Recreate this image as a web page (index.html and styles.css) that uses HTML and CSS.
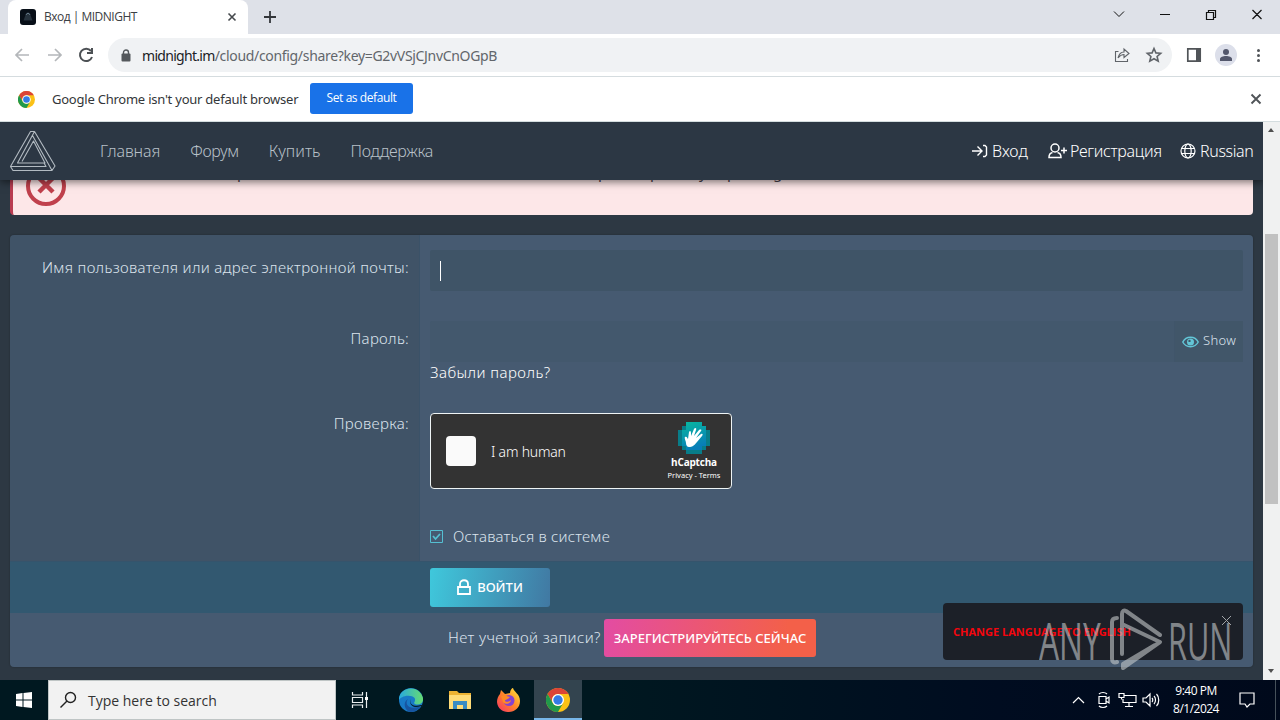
FILE: index.html
```html
<!DOCTYPE html>
<html lang="ru">
<head>
<meta charset="utf-8">
<title>Вход | MIDNIGHT</title>
<link rel="stylesheet" href="styles.css">
</head>
<body>
<div class="tabs">
  <div class="tab">
    <svg class="favicon" width="16" height="16" viewBox="0 0 16 16"><rect width="16" height="16" rx="3" fill="#080f18"/><path d="M3.500 11.500L5.500 6l1.500-2.500h2L10.500 6l2 5.500z" fill="#26323d"/><path d="M6 6l1-1.500h2L10 6" fill="none" stroke="#657988"/></svg>
    <span class="tab-title">Вход | MIDNIGHT</span>
    <svg class="tab-close" width="10" height="10" viewBox="0 0 10 10"><path d="M1.500 1.500l7 7m0-7l-7 7" stroke="#45494d" stroke-width="1.600"/></svg>
  </div>
  <svg class="plus" width="14" height="14" viewBox="0 0 14 14"><path d="M7 1v12M1 7h12" stroke="#34373b" stroke-width="1.800"/></svg>
  <svg class="winbtns" width="160" height="20" viewBox="0 0 160 20" fill="none" stroke="#111" stroke-width="1.200"><path d="M4 7.500l5 5 5-5" stroke-width="1"/><path d="M50 10.500h10M96.500 8.500h7v7h-7zM98.500 8.500v-2h7v7h-2M142.500 6l9 9m0-9l-9 9"/></svg>
</div>
<div class="toolbar">
  <svg width="90" height="20" viewBox="0 0 90 20" fill="none" stroke="#b4b7ba" stroke-width="1.700"><path d="M21 10H8m6-6l-6 6 6 6M40 10h13m-6-6l6 6-6 6"/><path d="M83 6A6.200 6.200 0 1 0 84 12M84 3v5h-5" stroke="#4c5054" stroke-width="2"/></svg>
  <div class="omnibox">
    <svg width="10" height="13" viewBox="0 0 10 13"><rect x=".5" y="4.500" width="9" height="8" rx="1" fill="#54585c"/><path d="M2.500 5V3.500a2.500 2.500 0 0 1 5 0V5" fill="none" stroke="#54585c" stroke-width="1.400"/></svg>
    <span class="url"><b>midnight.im</b><span class="path">/cloud/config/share?key=G2vVSjCJnvCnOGpB</span></span>
    <svg class="omni-icons" width="52" height="20" viewBox="0 0 52 20" fill="none" stroke="#606469" stroke-width="1.300"><path d="M6.500 6.500h-3v10h12V14M6 13c1-4 3-6 6-6V4l5 4.500-5 4v-3c-3 0-4 1-6 3.500z" stroke-width="1.100"/><path d="M42 3.500l1.900 4.400 4.800.4-3.600 3.200 1.100 4.700-4.200-2.500-4.200 2.500 1.100-4.700-3.600-3.200 4.800-.4z" stroke-width="1.600"/></svg>
  </div>
  <svg class="right-icons" width="90" height="24" viewBox="0 0 90 24"><path d="M5.800 5.800h12.400v12.400H5.800z" fill="none" stroke="#505458" stroke-width="1.700"/><path d="M14 5h5v14h-5z" fill="#505458"/><circle cx="44" cy="12" r="11" fill="#dcdfea"/><circle cx="44" cy="9" r="3" fill="#53576c"/><path d="M38 18v-2c0-4 12-4 12 0v2z" fill="#53576c"/><g fill="#505458"><circle cx="76.500" cy="7.500" r="1.500"/><circle cx="76.500" cy="12.500" r="1.500"/><circle cx="76.500" cy="17.500" r="1.500"/></g></svg>
</div>
<div class="infobar">
  <svg class="chrome" width="17" height="17" viewBox="0 0 24 24"><circle cx="12" cy="12" r="12" fill="#fbc116"/><path d="M1.600 6A12 12 0 0 1 22.400 6H12a6 6 0 0 0-5.200 9z" fill="#dc4437"/><path d="M1.600 6A12 12 0 0 0 12 24l5.200-9a6 6 0 0 1-10.400 0z" fill="#21994b"/><circle cx="12" cy="12" r="6" fill="#fff"/><circle cx="12" cy="12" r="4.700" fill="#347be5"/></svg>
  <span class="info-text">Google Chrome isn't your default browser</span>
  <span class="set-default"><span>Set as default</span></span>
  <svg class="info-close" width="12" height="12" viewBox="0 0 12 12"><path d="M1.500 1.500l9 9m0-9l-9 9" stroke="#505458" stroke-width="1.900"/></svg>
</div>
<div class="viewport">
  <main class="page">
    <header class="header">
      <svg class="logo" width="46" height="42" viewBox="0 0 46 42" fill="none" stroke="#b3bbc2" stroke-width="1.100" stroke-linejoin="round"><path d="M20.500 1.500h4L45 36l-3 4.500H3L.5 36.500zM24.500 1.500L7.500 33H35L23.500 11 12 31.500M.5 36.500H36L34 33M42 40.500L22.500 5.500"/></svg>
      <nav class="nav"><span class="n1">Главная</span><span class="n2">Форум</span><span class="n3">Купить</span><span class="n4">Поддержка</span></nav>
      <div class="account">
        <svg class="i-login" width="16" height="14" viewBox="0 0 16 14" fill="none" stroke="#fff" stroke-width="1.400"><path d="M0 7h10M5.500 2.500L10 7l-4.500 4.500M11 1.500h2l1.500 1.500v8L13 12.500h-2"/></svg><span class="a1">Вход</span>
        <svg class="i-user" width="20" height="16" viewBox="0 0 20 16" fill="none" stroke="#fff" stroke-width="1.500"><circle cx="7" cy="5" r="4"/><path d="M4.500 9.500C2 10 1 11.500 1 14.500h12c0-3-1-4.500-3.500-5M13 7.500h6m-3-3v6"/></svg><span class="a2">Регистрация</span>
        <svg class="i-globe" width="16" height="16" viewBox="0 0 16 16" fill="none" stroke="#fff" stroke-width="1.200"><circle cx="8" cy="8" r="7"/><ellipse cx="8" cy="8" rx="3.200" ry="7"/><path d="M1.500 5.500h13m-13 5h13"/></svg><span class="a3">Russian</span>
      </div>
    </header>
    <section class="error">
      <svg class="err-icon" width="42" height="42" viewBox="0 0 42 42" fill="none" stroke="#c0404c"><circle cx="21" cy="21" r="18" stroke-width="4"/><path d="M14 13l14 14m0-14l-14 14" stroke-width="4.500"/></svg>
      <p class="err-text"><span>для</span><span>работы</span><span>данной</span><span>раз</span><span>раз</span><span>ус</span><span>ролик</span><span>g</span></p>
    </section>
    <form class="form">
      <div class="fields">
        <div class="label l-user"><span>Имя пользователя или адрес электронной почты:</span></div>
        <div class="field f-user"><div class="input active"><i class="caret"></i></div></div>
        <div class="label l-pass"><span>Пароль:</span></div>
        <div class="field f-pass"><div class="input pass"><div class="show"><svg width="17" height="12" viewBox="0 0 17 12"><path d="M.8 6C4-.3 13-.3 16.200 6 13 12.300 4 12.300.8 6z" fill="none" stroke="#63c6d7" stroke-width="1.500"/><circle cx="8.500" cy="6" r="3.500" fill="#63c6d7"/><circle cx="7.500" cy="4.900" r="1.200" fill="#3d5968"/></svg><span>Show</span></div></div><span class="forgot">Забыли пароль?</span></div>
        <div class="label l-check"><span>Проверка:</span></div>
        <div class="field f-check">
          <div class="captcha"><i class="box"></i><span class="human">I am human</span>
            <div class="brand"><svg width="32" height="32" viewBox="0 0 32 32"><defs><linearGradient id="hc" x1="0" y1="0" x2=".3" y2="1"><stop stop-color="#08b89f"/><stop offset="1" stop-color="#087eb8"/></linearGradient></defs><path d="M8 0h16v4h4v4h4v16h-4v4h-4v4H8v-4H4v-4H0V8h4V4h4z" fill="#087d89"/><path d="M8 0h16v4h4v20h-4v4H8v-4H4V8h4z" fill="url(#hc)"/><path d="M8 21c0-2-2-5-1-6 2-1 2 1 3 2l1-7c1-2 2-1 2 1v3l3-7c1-2 3-1 2 1l-2 6 5-6c2-1 3 0 2 1l-5 7 5-4c2-1 2 1 1 2l-5 6c-3 4-5 5-8 5-2 0-3-2-3-4z" fill="#fff"/></svg><b>hCaptcha</b><small>Privacy - Terms</small></div>
          </div>
          <div class="remember"><svg width="13" height="13" viewBox="0 0 13 13" fill="none" stroke="#55bfd2"><path d="M.5.500h12v12H.5z"/><path d="M3 6l2.500 3L10 4" stroke-width="1.800"/></svg><span>Оставаться в системе</span></div>
        </div>
      </div>
      <div class="submit"><div class="login"><svg width="14" height="17" viewBox="0 0 14 17" fill="none" stroke="#fff" stroke-width="1.800"><path d="M1 8h12v7H1zM3 8V5c0-5 8-5 8 0v3"/></svg><span>ВОЙТИ</span></div></div>
      <div class="signup"><span class="q">Нет учетной записи?</span><div class="reg"><span>ЗАРЕГИСТРИРУЙТЕСЬ СЕЙЧАС</span></div></div>
    </form>
    <aside class="toast"><span>CHANGE LANGUAGE TO ENGLISH</span><svg width="11" height="11" viewBox="0 0 11 11"><path d="M1 1l9 9m0-9l-9 9" stroke="#a0a4a8"/></svg></aside>
    <div class="watermark"><span class="any">ANY</span><svg width="58" height="64" viewBox="0 0 58 64" fill="none" stroke="#c4c8ca" stroke-width="4" stroke-linecap="round" stroke-linejoin="round"><path d="M9 10c-3 0-5 1-5 4v37c0 3 2 4 5 3M14 46V6c0-3 2-4 4-3l34 24M14 16l38 18-37 26v-4l32-19M14 46v-5"/></svg><span class="run">RUN</span></div>
  </main>
  <div class="scroll"><i class="up"></i><i class="thumb"></i><i class="down"></i></div>
</div>
<footer class="taskbar">
  <div class="start"><svg width="16" height="16" viewBox="0 0 16 16" fill="#fff"><path d="M0 2l6.500-1v6.500H0zM7.500.900L16 0v7.500H7.500zM0 8.500h6.500V15L0 14zM7.500 8.500H16V16l-8.500-1z"/></svg></div>
  <div class="search"><svg width="18" height="18" viewBox="0 0 18 18" fill="none" stroke="#222" stroke-width="1.400"><circle cx="10.500" cy="6.500" r="5"/><path d="M7 10l-6.500 6.500"/></svg><span>Type here to search</span></div>
  <div class="app"><svg width="18" height="18" viewBox="0 0 18 18" fill="none" stroke="#e9eef0" stroke-width="1.200"><path d="M1.500 1v3h10V1M1.500 6.500h10v5h-10zM1.500 17v-3h10v3M15.500 1v16"/><path d="M14 6h3v3h-3z" fill="#fff" stroke="none"/></svg></div>
  <div class="app"><svg width="24" height="24" viewBox="0 0 24 24"><defs><linearGradient id="eg" x1="0" x2="1"><stop stop-color="#27a9df"/><stop offset="1" stop-color="#66db72"/></linearGradient></defs><circle cx="12" cy="12" r="12" fill="#187ac7"/><path d="M0 12C-1-1 20-5 24 10c1 7-7 8-9 5 3-5-1-7-4-7C6 7 1 10 0 12z" fill="url(#eg)"/><path d="M9 11c-4 5 1 12 13 7-3 5-8 6-11 6-5-1-8-10-2-13z" fill="#1755a1"/><path d="M12 11c-2 5 2 8 10 6l3 0v2l-3-1c-7 3-13-1-10-7z" fill="#061e2b"/></svg></div>
  <div class="app"><svg width="22" height="20" viewBox="0 0 22 20"><path d="M0 1h8l2 2h12v16H0z" fill="#edb333"/><path d="M0 5h22v14H0z" fill="#ffdc78"/><path d="M4 19v-8h14v8h-4v-4H8v4z" fill="#3a8cc3"/></svg></div>
  <div class="app"><svg width="24" height="24" viewBox="0 0 24 24"><defs><linearGradient id="ff" x1="1" y1="0" x2="0" y2="1"><stop stop-color="#ffed3e"/><stop offset=".5" stop-color="#ff8429"/><stop offset="1" stop-color="#f62e69"/></linearGradient></defs><path d="M3 6l1-4 4 4 5-1c0-3 2-5 3-5 1 4 7 6 7 13 0 14-22 15-23 1C0 11 1 8 3 6z" fill="url(#ff)"/><circle cx="12" cy="12.500" r="5.500" fill="#8442d2"/><path d="M4 8c4-2 5 0 9 1-2 3-5 2-5 4 2 2 5 0 6-1 0 4-6 5-8 2z" fill="#ff8b24"/></svg></div>
  <div class="app current"><svg width="24" height="24" viewBox="0 0 24 24"><circle cx="12" cy="12" r="12" fill="#fbc116"/><path d="M1.600 6A12 12 0 0 1 22.400 6H12a6 6 0 0 0-5.200 9z" fill="#dc4437"/><path d="M1.600 6A12 12 0 0 0 12 24l5.200-9a6 6 0 0 1-10.400 0z" fill="#21994b"/><circle cx="12" cy="12" r="6" fill="#fff"/><circle cx="12" cy="12" r="4.700" fill="#347be5"/></svg></div>
  <svg class="tray" width="90" height="18" viewBox="0 0 90 18" fill="none" stroke="#fff" stroke-width="1.200"><path d="M1 12l5.500-5.500L12 12M27 5.500h7v7h-7zM34 8l3-2v6l-3-2M27 3c2-2 6-2 8 0M27 15c2 2 6 2 8 0M52 4.500h12v7H51V8M57 11.500v4m-4 0h8M47 2.500h5v4h-5zM49.500 6.500v2M71 7h3l4-4v12l-4-4h-3zM80 7c1 1 1 3 0 4M82 5c2 2 2 6 0 8M84.500 3c3 3 3 9 0 12"/></svg>
  <div class="clock"><span class="time">9:40 PM</span><span class="date">8/1/2024</span></div>
  <svg class="notice" width="16" height="16" viewBox="0 0 16 16" fill="none" stroke="#fff" stroke-width="1.200"><path d="M1 1h14v11h-4l-3 3-2-3H1z"/></svg>
  <i class="edge"></i>
</footer>
</body>
</html>
```

FILE: styles.css
```css
* { box-sizing: border-box; }
body { margin: 0; width: 1280px; height: 720px; overflow: hidden; display: flex; flex-direction: column; font-family: "Noto Sans", "Open Sans", sans-serif; background: #fff; }
svg { display: block; flex-shrink: 0; }
span { white-space: nowrap; }
.tabs { height: 34px; flex-shrink: 0; background: #dee1e8; display: flex; align-items: center; padding-left: 8px; }
.tab { height: 34px; width: 240px; background: #fff; border-radius: 8px 8px 0 0; display: flex; align-items: center; padding: 0 11px 0 12px; }
.tab-title { font: 12px "Open Sans", sans-serif; letter-spacing: -.5px; color: #3c4043; margin: 0 0 1px 8px; }
.tab-close { margin-left: auto; }
.plus { margin-left: 15px; }
.winbtns { margin-left: auto; margin-bottom: 6px; margin-right: 10px; }
.toolbar { height: 43px; flex-shrink: 0; background: #fff; border-bottom: 1px solid #d5dcdf; display: flex; align-items: center; padding-left: 7px; }
.toolbar > svg:first-child { margin-left: 1px; }
.omnibox { width: 1064px; height: 34px; border-radius: 17px; background: #f0f2f4; margin-left: 10px; display: flex; align-items: center; padding-left: 13px; }
.url { margin-left: 11px; font-size: 14px; color: #62666b; }
.url b { font-weight: 400; color: #202124; letter-spacing: -.7px; }
.path { letter-spacing: -.32px; }
.omni-icons { margin-left: auto; margin-right: 8px; }
.right-icons { margin-left: 10px; }
.infobar { height: 45px; flex-shrink: 0; border-bottom: 1px solid #d4dddf; display: flex; align-items: center; padding: 0 18px 0 18px; }
.info-text { margin-left: 17px; width: 246px; font-size: 13px; letter-spacing: -.23px; color: #333639; }
.set-default { width: 103px; height: 31px; margin: 0 0 2px 12px; background: #1972e8; color: #fff; border-radius: 3px; font: 12px "Open Sans", sans-serif; letter-spacing: -.42px; display: grid; place-items: center; }
.set-default span { margin-bottom: 1px; }
.info-close { margin-left: auto; }
.viewport { height: 558px; flex-shrink: 0; display: flex; position: relative; }
.page { width: 1263px; height: 558px; background: #2d3843; overflow: hidden; position: relative; }
.header { height: 58px; background: #2c3744; box-shadow: 0 2px 8px #0008; position: relative; z-index: 2; display: flex; align-items: center; padding: 0 10px; color: #b8c0c8; font-size: 16px; font-weight: 300; }
.nav { display: flex; gap: 30px; margin: 0 0 1px 44px; letter-spacing: -.1px; }
.n2 { letter-spacing: -.3px; }
.n3 { letter-spacing: .05px; }
.n4 { letter-spacing: -.3px; }
.account { margin-left: auto; display: flex; align-items: center; color: #fff; }
.account span { margin: 0 0 1px 4px; }
.account .a1 { width: 36px; letter-spacing: 0; }
.account .a2 { margin-left: 2px; width: 91px; letter-spacing: -.32px; }
.account .a3 { width: 53px; letter-spacing: -.35px; }
.i-user { margin-left: 20px; }
.i-globe { margin-left: 19px; }
.error { height: 50px; margin: -15px 10px 0; background: #fde7e8; border-left: 3px solid #b93c51; border-radius: 4px; display: flex; position: relative; }
.err-icon { margin: 0 0 0 12px; }
.err-text { position: absolute; margin: 0; left: 84px; top: -4px; font-size: 15px; line-height: 22px; color: #49404a; display: grid; grid-template-columns: 140px 245px 116px 52px 49px 28px 46px 20px; }
.form { margin: 20px 10px 0; height: 432px; border-radius: 4px; overflow: hidden; box-shadow: 0 0 2px #0005; color: #dce4ed; font-size: 15px; font-weight: 300; letter-spacing: .33px; }
.fields { height: 326px; display: grid; grid-template: 71px 92px 163px / 410px 1fr; }
.label { background: #405367; border-right: 1px solid #3b5268; text-align: right; padding: 21px 10px 0 0; line-height: 22px; }
.field { background: #465a71; padding: 15px 10px 0; }
.input { height: 41px; border-radius: 2px; background: #3f5467; }
.active { padding: 11px 10px; }
.caret { display: block; width: 1px; height: 20px; background: #fff; }
.pass { background: #43586d; display: flex; justify-content: flex-end; }
.show { width: 69px; border-left: 1px solid #40556a; background: #415669; display: flex; align-items: center; gap: 4px; padding: 0 7px; font-size: 13px; letter-spacing: .3px; }
.show span { margin-bottom: 3px; }
.l-check { padding-top: 14px; }
.forgot { display: block; margin-top: -1px; line-height: 22px; color: #fff; letter-spacing: .45px; }
.captcha { width: 302px; height: 76px; background: #333; border: 1px solid #eef4f5; border-radius: 4px; display: flex; align-items: center; padding-left: 15px; color: #fff; letter-spacing: 0; }
.box { width: 30px; height: 30px; border-radius: 4px; background: #fafafa; }
.human { font-size: 14px; margin-left: 15px; letter-spacing: -.2px; }
.brand { width: 74px; margin-left: auto; display: flex; flex-direction: column; align-items: center; }
.brand b { font: bold 10px/17px "Open Sans", sans-serif; letter-spacing: -.2px; }
.brand small { font-size: 7.500px; font-weight: 400; line-height: 9px; white-space: nowrap; }
.remember { margin-top: 36px; display: flex; gap: 10px; align-items: center; line-height: 22px; letter-spacing: .2px; }
.remember svg { margin-top: 1px; }
.submit { height: 52px; background: #325870; border-top: 1px solid #35546c; padding: 6px 0 0 420px; letter-spacing: 0; }
.login { width: 120px; height: 39px; border-radius: 3px; background: linear-gradient(100deg, #3fc8dc, #4178a2); color: #fff; font-size: 13px; font-weight: 500; display: flex; align-items: center; justify-content: center; gap: 6px; }
.login span { margin-bottom: 1px; }
.signup { height: 54px; background: #465a71; display: flex; align-items: flex-start; padding: 6px 0 0 438px; }
.q { width: 156px; line-height: 37px; letter-spacing: .38px; }
.reg { width: 212px; height: 38px; background: linear-gradient(100deg, #e34ca3, #f36049 85%); border-radius: 3px; display: grid; place-items: center; color: #fff; font-size: 13px; font-weight: 500; letter-spacing: 0; }
.toast { position: absolute; left: 943px; top: 481px; width: 300px; height: 57px; border-radius: 4px; background: #1c2028; color: #f4060e; font: bold 11px "Open Sans", sans-serif; display: flex; align-items: center; padding-left: 10px; }
.toast svg { position: absolute; right: 11px; top: 12px; }
.watermark { position: absolute; left: 1039px; top: 485px; width: 200px; height: 66px; opacity: .6; color: #c4c8ca; display: flex; align-items: center; }
.watermark span { font: 500 52px/60px "Open Sans", sans-serif; width: 65px; height: 60px; transform: scaleX(.61); transform-origin: left; }
.watermark svg { margin-left: 4px; }
.watermark .run { margin-left: 2px; transform: scaleX(.59); }
.scroll { width: 17px; background: #f0f1f1; position: relative; }
.up, .down, .thumb { position: absolute; }
.up { top: 6px; left: 5px; border: 3.5px solid transparent; border-bottom: 4px solid #505050; border-top: 0; }
.thumb { width: 13px; height: 270px; left: 2px; top: 112px; background: #c1c1c1; }
.down { bottom: 7px; left: 5px; border: 3.5px solid transparent; border-top: 4px solid #505050; border-bottom: 0; }
.taskbar { height: 40px; background: linear-gradient(90deg, #001820 0, #001820 48%, #000c20 78%, #00091b); display: flex; align-items: center; color: #fff; }
.start { width: 48px; display: grid; place-items: center; }
.search { width: 288px; height: 40px; background: #f2f2f2; border: 1px solid #bfc5c5; color: #333; display: flex; align-items: center; gap: 10px; padding-left: 11px; font: 14px "Open Sans", sans-serif; }
.app { width: 48px; height: 40px; display: grid; place-items: center; }
.app:nth-child(4) { margin-left: 3px; }
.app:nth-child(n+5) { margin-left: 1px; }
.current { background: #33444f; border-bottom: 2px solid #78b7e9; padding-top: 2px; }
.tray { margin: 0 0 0 auto; }
.clock { width: 60px; display: flex; flex-direction: column; align-items: center; font: 12px/18px "Open Sans", sans-serif; letter-spacing: -.5px; margin-left: 4px; }
.notice { margin-left: 13px; }
.edge { width: 1px; height: 40px; margin: 0 4px 0 20px; background: #46515a; }
```
